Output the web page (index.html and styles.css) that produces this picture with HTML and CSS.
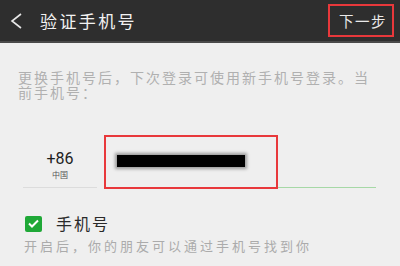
FILE: index.html
```html
<!DOCTYPE html>
<html lang="zh-CN">
<head>
<meta charset="utf-8">
<link rel="stylesheet" href="styles.css">
</head>
<body>
<div class="page">
  <header class="bar">
    <svg class="back" width="12" height="16" viewBox="0 0 12 16"><path d="M11 1 L2 8 L11 15" fill="none" stroke="#e8e8e8" stroke-width="1.6"/></svg>
    <div class="title">验证手机号</div>
    <div class="next">下一步</div>
  </header>
  <p class="hint">更换手机号后，下次登录可使用新手机号登录。当前手机号：</p>
  <div class="phone-row">
    <div class="country">
      <div class="code">+86</div>
      <div class="cname">中国</div>
    </div>
    <div class="input">
      <div class="mask"></div>
      <div class="mark"></div>
    </div>
  </div>
  <div class="check-row">
    <div class="box"><svg width="11" height="9" viewBox="0 0 11 9"><path d="M1 4.5 L4 7.5 L10 1.5" fill="none" stroke="#fff" stroke-width="2"/></svg></div>
    <div class="label">手机号</div>
  </div>
  <div class="sub">开启后，你的朋友可以通过手机号找到你</div>
</div>
</body>
</html>
```
FILE: styles.css
```css
* { box-sizing: border-box; }
html, body { margin: 0; padding: 0; }
body {
  background: #efefef;
  font-family: "Noto Sans CJK SC", "Noto Sans", sans-serif;
  width: 400px;
  height: 266px;
  overflow: hidden;
}
.page { width: 400px; height: 266px; }
.bar {
  height: 43px;
  background: #2e2e2e;
  border-bottom: 2px solid #4a4a4a;
  display: flex;
  align-items: center;
}
.back { margin-left: 10px; display: block; }
.title {
  margin-left: 18px;
  color: #f2f2f2;
  font-size: 17px;
  letter-spacing: 2.4px;
  line-height: 20px;
}
.next {
  margin-left: auto;
  margin-right: 6px;
  width: 66px;
  height: 33px;
  border: 2px solid #e8383b;
  color: #eaeaea;
  font-size: 14.5px;
  letter-spacing: 1.5px;
  display: flex;
  align-items: center;
  justify-content: center;
  padding-left: 4px;
  padding-bottom: 1px;
}
.hint {
  margin: 27px 0 0 0;
  padding: 0 18px;
  color: #b0b0b0;
  font-size: 14px;
  letter-spacing: 2px;
  line-height: 15px;
}
.phone-row {
  display: flex;
  margin-top: 35px;
  padding-left: 23px;
  padding-right: 24px;
  gap: 7px;
}
.country {
  width: 74px;
  height: 53px;
  border-bottom: 1px solid #dcdcdc;
  display: flex;
  flex-direction: column;
  align-items: center;
  padding-top: 14px;
}
.code {
  color: #1e1e1e;
  font-family: Roboto, "Noto Sans", sans-serif;
  font-size: 16px;
  line-height: 20px;
}
.cname {
  color: #555;
  font-size: 8px;
  line-height: 10px;
  margin-top: 1px;
}
.input {
  flex: 1;
  height: 53px;
  border-bottom: 1px solid #a6d8a6;
  position: relative;
}
.mask {
  position: absolute;
  left: 13px;
  top: 20px;
  width: 128px;
  height: 12px;
  background: #000;
  box-shadow: 0 0 3px 2px #9a9a9a;
}
.mark {
  position: absolute;
  left: 0;
  top: 0;
  width: 174px;
  height: 54px;
  border: 2px solid #e8383b;
}
.check-row {
  display: flex;
  align-items: center;
  margin-top: 27px;
  padding-left: 25px;
  height: 17px;
}
.box {
  width: 17px;
  height: 16px;
  background: #1fa837;
  border-radius: 2px;
  display: flex;
  align-items: center;
  justify-content: center;
}
.label {
  margin-left: 14px;
  color: #2a2a2a;
  font-size: 16px;
  letter-spacing: 2px;
  line-height: 17px;
}
.sub {
  margin-top: 6px;
  padding-left: 24px;
  color: #ababab;
  font-size: 13px;
  letter-spacing: 3px;
  line-height: 15px;
}
```
